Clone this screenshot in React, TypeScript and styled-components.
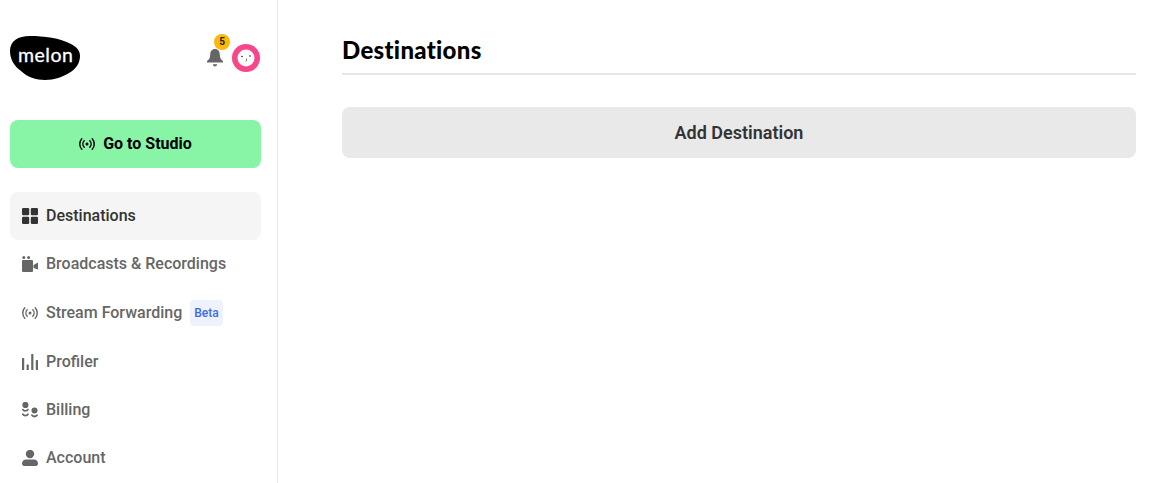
import React from "react";
import styled, { createGlobalStyle } from "styled-components";

const Global = createGlobalStyle`
  html, body {
    margin: 0;
    padding: 0;
    height: 100%;
    background: #fff;
    overflow: hidden;
    font-family: Roboto, "Liberation Sans", sans-serif;
  }
  #root { height: 100%; }
`;

const Page = styled.div`
  display: flex;
  height: 483px;
`;

const Sidebar = styled.aside`
  box-sizing: border-box;
  width: 278px;
  flex: none;
  padding: 36px 16px 0 10px;
  border-right: 1px solid #e6e6e6;
  overflow: hidden;
`;

const TopRow = styled.div`
  display: flex;
  justify-content: space-between;
  align-items: flex-start;
  height: 84px;
  padding-right: 1px;
`;

const Logo = styled.div`
  position: relative;
  width: 70px;
  height: 44px;
`;

const LogoWord = styled.span`
  position: absolute;
  left: 8px;
  top: 5px;
  color: #fff;
  font-family: Lato, sans-serif;
  font-size: 19.5px;
  line-height: 28px;
  letter-spacing: 0.5px;
  -webkit-text-stroke: 0.3px #fff;
`;

const TopIcons = styled.div`
  display: flex;
  align-items: flex-start;
  gap: 8px;
  padding-top: 8px;
`;

const Bell = styled.div`
  position: relative;
  width: 18px;
  height: 20px;
  margin-top: 4px;
`;

const Count = styled.span`
  position: absolute;
  left: 8px;
  top: -14px;
  width: 16px;
  height: 16px;
  border-radius: 50%;
  background: #fcb80b;
  color: #222;
  font-size: 10px;
  font-weight: 700;
  line-height: 16px;
  text-align: center;
`;

const StudioButton = styled.button`
  display: flex;
  align-items: center;
  justify-content: center;
  gap: 8px;
  width: 100%;
  height: 48px;
  margin: 0 0 24px;
  padding: 0;
  border: 0;
  border-radius: 8px;
  background: #88f5a6;
  color: #000;
  font: 700 16px Roboto, sans-serif;
`;

const Nav = styled.nav`
  display: flex;
  flex-direction: column;
`;

const NavItem = styled.a<{ $active?: boolean; $height?: number }>`
  display: flex;
  align-items: center;
  gap: 8px;
  height: ${(p) => p.$height ?? 48}px;
  padding-left: 12px;
  border-radius: 8px;
  background: ${(p) => (p.$active ? "#f5f5f5" : "transparent")};
  color: ${(p) => (p.$active ? "#333" : "#666")};
  font-size: 16px;
  font-weight: 500;
`;

const Label = styled.span`
  padding-bottom: 2px;
`;

const Beta = styled.span`
  padding: 0 4px;
  height: 26px;
  border-radius: 4px;
  background: #eef2fc;
  color: #3d6be0;
  font-size: 12px;
  font-weight: 500;
  line-height: 26px;
`;

const Main = styled.main`
  flex: 1;
  padding: 36px 21px 0 64px;
`;

const Title = styled.h1`
  margin: 0 0 32px;
  height: 37px;
  border-bottom: 2px solid #e6e6e6;
  color: #000;
  font-family: Lato, sans-serif;
  font-size: 24px;
  font-weight: 900;
  line-height: 28px;
  letter-spacing: 0.3px;
`;

const AddButton = styled.button`
  display: block;
  width: 100%;
  height: 51px;
  padding: 0 0 1px;
  border: 0;
  border-radius: 8px;
  background: #e9e9e9;
  color: #333;
  font: 600 18px Roboto, sans-serif;
`;

const Icon = styled.svg`
  display: block;
  flex: none;
  width: 16px;
  height: 16px;
  fill: currentColor;
`;

const Broadcast = () => (
  <Icon viewBox="0 0 16 16">
    <circle cx="8" cy="8" r="1.5" />
    <g fill="none" stroke="currentColor" strokeWidth="1.4" strokeLinecap="round">
      <path d="M5.2 4.8a4.6 4.6 0 0 0 0 6.4" />
      <path d="M10.8 4.8a4.6 4.6 0 0 1 0 6.4" />
      <path d="M2.8 2.8a7.6 7.6 0 0 0 0 10.4" />
      <path d="M13.2 2.8a7.6 7.6 0 0 1 0 10.4" />
    </g>
  </Icon>
);

const Grid = () => (
  <Icon viewBox="0 0 16 16">
    <rect x="0" y="0" width="7.2" height="7.2" rx="1.2" />
    <rect x="8.8" y="0" width="7.2" height="7.2" rx="1.2" />
    <rect x="0" y="8.8" width="7.2" height="7.2" rx="1.2" />
    <rect x="8.8" y="8.8" width="7.2" height="7.2" rx="1.2" />
  </Icon>
);

const Camera = () => (
  <Icon viewBox="0 0 16 16">
    <circle cx="1.800" cy="1.600" r="1.500" />
    <circle cx="6.600" cy="1.600" r="1.500" />
    <rect x="0" y="4" width="11" height="12" rx="1" />
    <path d="M11.500 9 16 6.500v7L11.500 12z" />
  </Icon>
);

const Bars = () => (
  <Icon viewBox="0 0 16 16">
    <rect x="0" y="4" width="2.2" height="12" rx="0.5" />
    <rect x="4.6" y="10.5" width="2.2" height="5.5" rx="0.5" />
    <rect x="9.2" y="0" width="2.2" height="16" rx="0.5" />
    <rect x="13.8" y="6" width="2.2" height="10" rx="0.5" />
  </Icon>
);

const Coins = () => (
  <Icon viewBox="0 0 16 16">
    <circle cx="3.400" cy="2.900" r="3.100" />
    <g fill="none" stroke="currentColor" strokeWidth="1.800" strokeLinecap="round">
      <path d="M.9 7.600c.9 1.700 4.100 1.700 5 0" />
      <path d="M.9 12.300c.9 1.700 4.100 1.700 5 0" />
      <path d="M9.900 13.200c.9 1.700 4.300 1.700 5.200 0" />
    </g>
    <circle cx="12.500" cy="8.500" r="3" />
  </Icon>
);

const Person = () => (
  <Icon viewBox="0 0 16 16">
    <circle cx="8" cy="4" r="4.200" />
    <path d="M0 13.400C0 10.800 2 9.400 4 9.400h8c2 0 4 1.400 4 4 0 1.500-1 2.600-2.600 2.600H2.600C1 16 0 14.900 0 13.400z" />
  </Icon>
);

const items = [
  { label: "Destinations", icon: <Grid />, active: true },
  { label: "Broadcasts & Recordings", icon: <Camera /> },
  { label: "Stream Forwarding", icon: <Broadcast />, beta: true, height: 50 },
  { label: "Profiler", icon: <Bars /> },
  { label: "Billing", icon: <Coins /> },
  { label: "Account", icon: <Person /> },
];

export default function App() {
  return (
    <Page>
      <Global />
      <Sidebar>
        <TopRow>
          <Logo>
            <svg width="70" height="44" viewBox="0 0 70 44">
              <path d="M0 15C0 5 8 0 20 0c14 0 30 2 41 8 6 3 9 7 9 12 0 7-4 13-11 17-7 4-14 7-24 7-9 0-18-3-24-9C4 30 0 23 0 15z" />
            </svg>
            <LogoWord>melon</LogoWord>
          </Logo>
          <TopIcons>
            <Bell>
              <svg width="18" height="20" viewBox="0 0 18 20" fill="#666">
                <path d="M9 1c3.300 0 4.800 2.500 4.800 5.500 0 3 .8 4.700 3.200 6.500v1.500H1V13c2.400-1.800 3.200-3.500 3.200-6.500C4.200 3.500 5.700 1 9 1z" />
                <path d="M6.800 16.300h4.400c0 1-1 2.200-2.200 2.200s-2.200-1.200-2.200-2.200z" />
              </svg>
              <Count>5</Count>
            </Bell>
            <svg width="28" height="28" viewBox="0 0 28 28">
              <circle cx="14" cy="14" r="14" fill="#f8468a" />
              <circle cx="14" cy="14" r="8.500" fill="#fff" />
              <circle cx="10" cy="12.500" r="0.800" fill="#222" />
              <circle cx="18" cy="12" r="0.800" fill="#222" />
              <path d="M14.500 14.500v2.500l-1 .3" fill="none" stroke="#555" strokeWidth="0.7" />
            </svg>
          </TopIcons>
        </TopRow>
        <StudioButton>
          <Broadcast />
          <Label>Go to Studio</Label>
        </StudioButton>
        <Nav>
          {items.map((item) => (
            <NavItem key={item.label} $active={item.active} $height={item.height}>
              {item.icon}
              <Label>{item.label}</Label>
              {item.beta && <Beta>Beta</Beta>}
            </NavItem>
          ))}
        </Nav>
      </Sidebar>
      <Main>
        <Title>Destinations</Title>
        <AddButton>Add Destination</AddButton>
      </Main>
    </Page>
  );
}
